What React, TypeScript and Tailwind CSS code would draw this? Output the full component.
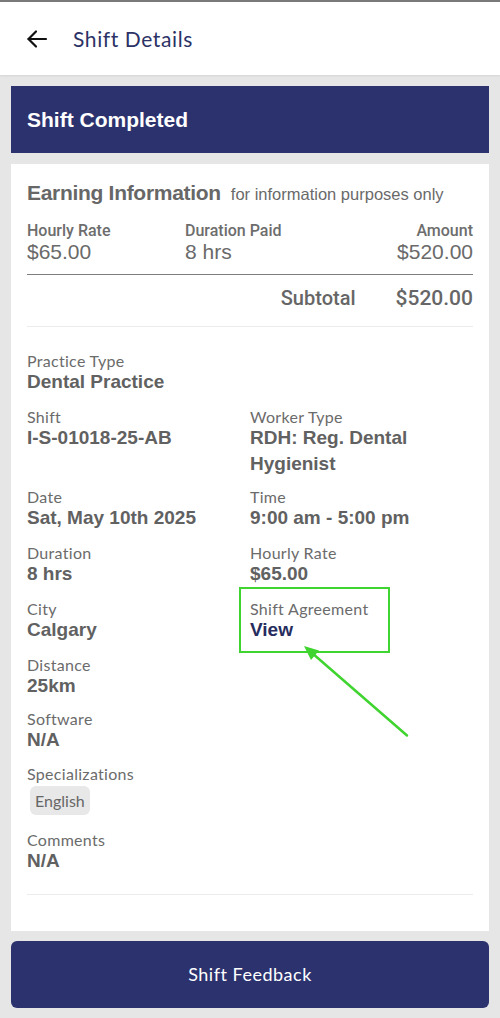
import React from "react";

const geo = { fontFamily: "Lato, 'Noto Sans', sans-serif" };
const helv = { fontFamily: "'Liberation Sans', Arial, sans-serif" };
const med = { fontFamily: "Roboto, 'Liberation Sans', Arial, sans-serif" };

function Item({ label, value, children }: { label: string; value?: string; children?: React.ReactNode }) {
  return (
    <div>
      <div style={geo} className="text-[16px] leading-[17px] tracking-[0.3px] text-[#6b6b6b]">{label}</div>
      {value && (
        <div style={helv} className="text-[19px] leading-[26px] font-bold text-[#616161]">{value}</div>
      )}
      {children}
    </div>
  );
}

export default function App() {
  return (
    <div className="w-[500px] h-[1018px] bg-[#e6e6e6] flex flex-col overflow-hidden">
      <div className="h-[2px] bg-[#7a7a7a]" />
      <div className="h-[73px] bg-white flex items-center pl-[25px] shadow-[0_1px_2px_rgba(0,0,0,0.08)]">
        <svg width="24" height="24" viewBox="0 0 24 24" fill="none" stroke="#111" strokeWidth="2.2" strokeLinecap="round" strokeLinejoin="round">
          <path d="M21 12H3.5" />
          <path d="M11 4.5L3.5 12L11 19.5" />
        </svg>
        <span style={geo} className="ml-[24px] text-[21px] text-[#2c3266] tracking-[0.6px]">Shift Details</span>
      </div>
      <div className="px-[11px] pt-[11px] flex flex-col">
        <div className="h-[67px] bg-[#2c326e] flex items-center px-[16px]">
          <span style={helv} className="text-white text-[21px] font-bold">Shift Completed</span>
        </div>
        <div className="mt-[11px] bg-white px-[16px] pt-[13px] pb-[36px]">
          <div className="flex items-baseline">
            <span style={helv} className="text-[21px] font-bold text-[#676767] tracking-[-0.3px]">Earning Information</span>
            <span style={helv} className="ml-[10px] text-[16.5px] text-[#6a6a6a]">for information purposes only</span>
          </div>
          <div className="mt-[13px] flex">
            <div className="w-[158px]">
              <div style={med} className="text-[16px] leading-[18px] font-medium text-[#6d6d6d]">Hourly Rate</div>
              <div style={helv} className="text-[21px] leading-[24px] text-[#6a6a6a]">$65.00</div>
            </div>
            <div className="flex-1">
              <div style={med} className="text-[16px] leading-[18px] font-medium text-[#6d6d6d]">Duration Paid</div>
              <div style={helv} className="text-[21px] leading-[24px] text-[#6a6a6a]">8 hrs</div>
            </div>
            <div className="text-right">
              <div style={med} className="text-[16px] leading-[18px] font-medium text-[#6d6d6d]">Amount</div>
              <div style={helv} className="text-[21px] leading-[24px] text-[#6a6a6a]">$520.00</div>
            </div>
          </div>
          <div className="mt-[10px] h-[1.5px] bg-[#7d7d7d]" />
          <div style={med} className="flex justify-end items-center pt-[11px] pb-[16px] leading-[24px] text-[#666] font-medium">
            <span className="text-[20px]">Subtotal</span>
            <span className="ml-[40px] text-[21px]">$520.00</span>
          </div>
          <div className="h-[1px] bg-[#ececec]" />

          <div className="mt-[25px] flex flex-col">
            <Item label="Practice Type" value="Dental Practice" />
            <div className="mt-[13px] grid grid-cols-2">
              <Item label="Shift" value="I-S-01018-25-AB" />
              <Item label="Worker Type" value="RDH: Reg. Dental Hygienist" />
            </div>
            <div className="mt-[11px] grid grid-cols-2">
              <Item label="Date" value="Sat, May 10th 2025" />
              <Item label="Time" value="9:00 am - 5:00 pm" />
            </div>
            <div className="mt-[13px] grid grid-cols-2">
              <Item label="Duration" value="8 hrs" />
              <Item label="Hourly Rate" value="$65.00" />
            </div>
            <div className="mt-[13px] grid grid-cols-2">
              <Item label="City" value="Calgary" />
              <div className="relative">
                <Item label="Shift Agreement">
                  <div style={helv} className="text-[19px] leading-[26px] font-bold text-[#262d5e]">View</div>
                </Item>
                <div className="absolute left-[-11px] top-[-13px] w-[151px] h-[66px] border-[2px] border-[#3fd42f] pointer-events-none" />
                <svg className="absolute left-[50px] top-[42px] pointer-events-none" width="115" height="100" viewBox="0 0 115 100" fill="none">
                  <path d="M107 93.5L12 11" stroke="#3fd42f" strokeWidth="2.5" strokeLinecap="round" />
                  <path d="M4 4L19 8.5L11 18Z" fill="#3fd42f" />
                </svg>
              </div>
            </div>
            <div className="mt-[13px]"><Item label="Distance" value="25km" /></div>
            <div className="mt-[11px]"><Item label="Software" value="N/A" /></div>
            <div className="mt-[12px]">
              <Item label="Specializations">
                <div className="mt-[4px] ml-[3px] inline-flex items-center bg-[#e8e8e8] rounded-[6px] px-[5px] h-[29px]">
                  <span style={geo} className="text-[16px] text-[#666]">English</span>
                </div>
              </Item>
            </div>
            <div className="mt-[16px]"><Item label="Comments" value="N/A" /></div>
          </div>
          <div className="mt-[20px] h-[1px] bg-[#ececec]" />
        </div>
        <div className="mt-[10px] h-[67px] rounded-[6px] bg-[#2c326e] flex items-center justify-center">
          <span style={geo} className="text-white text-[18px] tracking-[0.5px]">Shift Feedback</span>
        </div>
      </div>
    </div>
  );
}
